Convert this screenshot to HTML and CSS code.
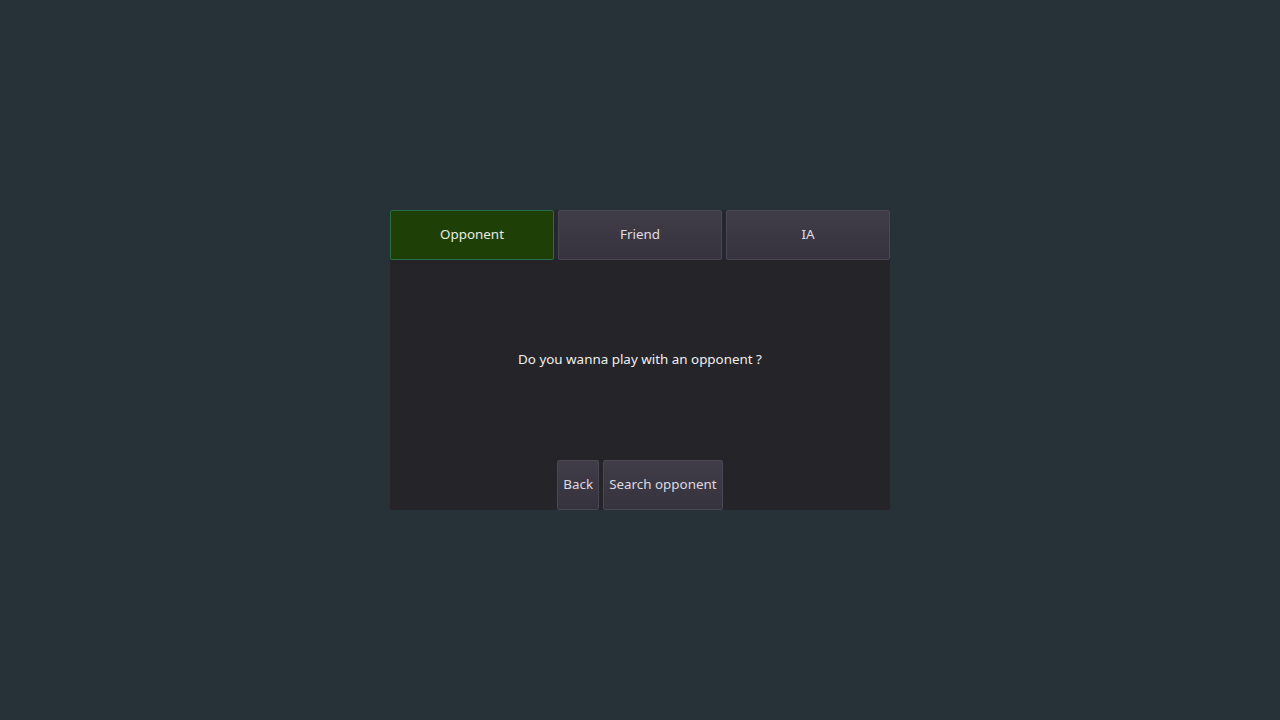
FILE: index.html
```html
<!DOCTYPE html>
<html>
<head>
<meta charset="utf-8">
<link rel="stylesheet" href="styles.css">
</head>
<body>
<div class="screen">
  <div class="panel">
    <div class="tabs">
      <div class="tab active">Opponent</div>
      <div class="tab">Friend</div>
      <div class="tab">IA</div>
    </div>
    <div class="content">
      <div class="message">Do you wanna play with an opponent ?</div>
      <div class="actions">
        <div class="btn back">Back</div>
        <div class="btn search">Search opponent</div>
      </div>
    </div>
  </div>
</div>
</body>
</html>
```
FILE: styles.css
```css
html, body {
  margin: 0;
  padding: 0;
  background: #263238;
  width: 1280px;
  height: 720px;
  overflow: hidden;
  font-family: "Noto Sans", "DejaVu Sans", sans-serif;
  font-size: 13.4px;
}
.screen {
  width: 1280px;
  height: 720px;
  display: flex;
  align-items: center;
  justify-content: center;
}
.panel {
  width: 500px;
  height: 300px;
  display: flex;
  flex-direction: column;
}
.tabs {
  display: flex;
  gap: 4px;
  height: 50px;
  background: #24272d;
}
.tab {
  flex: 1;
  box-sizing: border-box;
  border: 1px solid #4a4754;
  border-radius: 2px;
  background: linear-gradient(#403d49, #36333e);
  color: #e0dee6;
  display: flex;
  align-items: center;
  justify-content: center;
  padding-bottom: 3px;
}
.tab.active {
  background: #1e4006;
  border-color: #2a6b4c;
  color: #e8ece2;
}
.content {
  flex: 1;
  background: #252429;
  display: flex;
  flex-direction: column;
}
.message {
  flex: 1;
  display: flex;
  align-items: center;
  justify-content: center;
  color: #f0f0f0;
  padding-bottom: 3px;
}
.actions {
  display: flex;
  justify-content: center;
  gap: 4px;
  height: 50px;
}
.btn {
  box-sizing: border-box;
  border: 1px solid #4a4754;
  border-radius: 2px;
  background: linear-gradient(#403d49, #36333e);
  color: #dcdae2;
  display: flex;
  align-items: center;
  justify-content: center;
  padding: 0 5px 3px;
}
```
